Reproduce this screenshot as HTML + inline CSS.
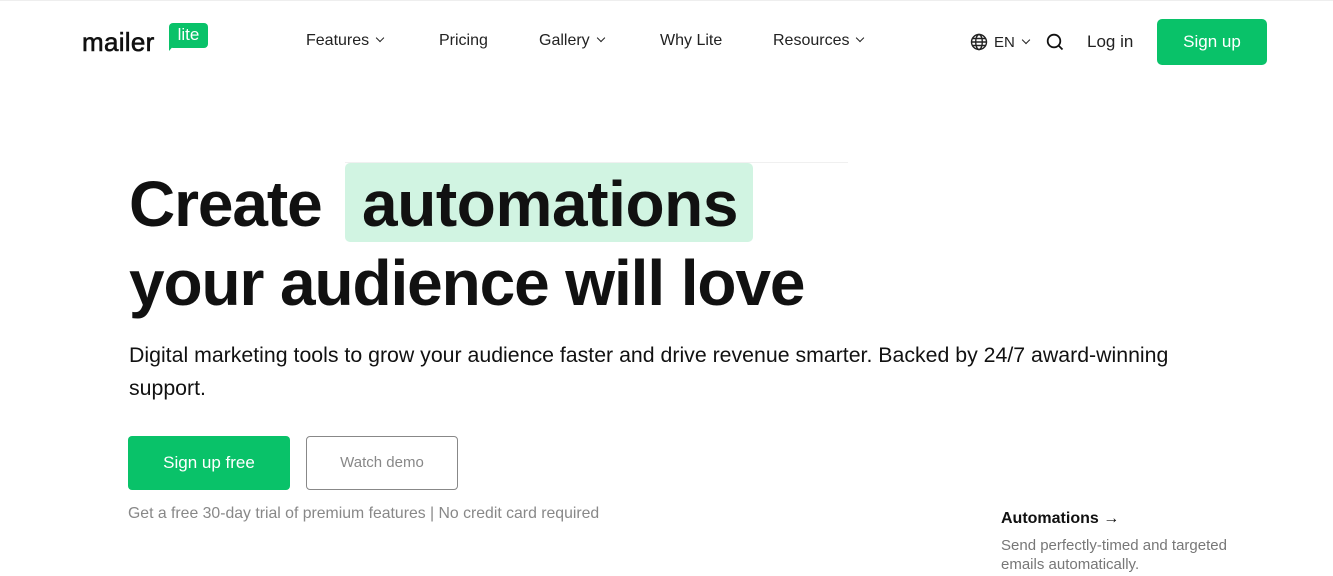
<!DOCTYPE html>
<html><head><meta charset="utf-8"><style>
*{margin:0;padding:0;box-sizing:border-box}
body{width:1333px;height:576px;overflow:hidden;background:#fff;font-family:"Liberation Sans",sans-serif;color:#111;position:relative}
.a{position:absolute;white-space:nowrap}
.nav{font-size:16px;color:#222;top:32px}
.chev{display:inline-block;width:6px;height:6px;border-right:1.6px solid #222;border-bottom:1.6px solid #222;transform:rotate(45deg);margin-left:8px;position:relative;top:-4px}
h1{font-size:64px;font-weight:bold;letter-spacing:-1.1px;position:absolute;white-space:nowrap}
</style></head><body>
<div style="position:absolute;top:0;left:0;width:1333px;height:1px;background:#eee"></div>
<div class="a" style="left:82px;top:27px;font-size:26px;letter-spacing:0.3px;color:#111;-webkit-text-stroke:0.6px #111">mailer</div>
<div class="a" style="left:169px;top:23px;width:39px;height:25px;background:#09c269;border-radius:4px;color:#fff;font-size:17px;text-align:center;line-height:24px">lite</div>
<div class="a" style="left:169px;top:44px;width:0;height:0;border-left:6px solid #09c269;border-bottom:7px solid transparent"></div>
<div class="a nav" style="left:306px">Features<span class="chev"></span></div>
<div class="a nav" style="left:439px">Pricing</div>
<div class="a nav" style="left:539px">Gallery<span class="chev"></span></div>
<div class="a nav" style="left:660px">Why Lite</div>
<div class="a nav" style="left:773px">Resources<span class="chev"></span></div>
<svg class="a" style="left:970px;top:33px" width="18" height="18" viewBox="0 0 18 18" fill="none" stroke="#222" stroke-width="1.4"><circle cx="9" cy="9" r="7.5"/><ellipse cx="9" cy="9" rx="3.3" ry="7.5"/><path d="M1.5 9h15M2.5 5.5h13M2.5 12.5h13"/></svg>
<div class="a nav" style="left:994px;top:34px;font-size:15px">EN<span class="chev"></span></div>
<svg class="a" style="left:1046px;top:33px" width="18" height="18" viewBox="0 0 18 18" fill="none" stroke="#111" stroke-width="1.8"><circle cx="8" cy="8" r="6.3"/><path d="M12.5 12.5l4 4"/></svg>
<div class="a nav" style="left:1087px;font-size:17px">Log in</div>
<div class="a" style="left:1157px;top:19px;width:110px;height:46px;background:#09c269;border-radius:5px;color:#fff;font-size:17px;text-align:center;line-height:46px">Sign up</div>

<div class="a" style="left:345px;top:163px;width:408px;height:79px;background:#d1f4e2;border-radius:5px"></div>
<div class="a" style="left:345px;top:162px;width:503px;height:1px;background:#f0f0f0"></div>
<h1 style="top:167px;left:129px">Create</h1>
<h1 style="top:167px;left:362px;letter-spacing:-0.4px">automations</h1>
<h1 style="top:246px;left:129px">your audience will love</h1>
<div class="a" style="left:129px;top:339px;font-size:21.3px;line-height:33px;color:#111;white-space:normal;width:1080px">Digital marketing tools to grow your audience faster and drive revenue smarter. Backed by 24/7 award-winning support.</div>
<div class="a" style="left:128px;top:436px;width:162px;height:54px;background:#09c269;border-radius:4px;color:#fff;font-size:17px;text-align:center;line-height:54px">Sign up free</div>
<div class="a" style="left:306px;top:436px;width:152px;height:54px;border:1px solid #888;border-radius:4px;color:#888;font-size:15px;text-align:center;line-height:52px">Watch demo</div>
<div class="a" style="left:128px;top:505px;font-size:15.8px;color:#888">Get a free 30-day trial of premium features | No credit card required</div>
<div class="a" style="left:1001px;top:510px;font-size:16px;font-weight:bold;color:#111">Automations →</div>
<div class="a" style="left:1001px;top:536px;font-size:15px;line-height:19px;color:#777;white-space:normal;width:250px">Send perfectly-timed and targeted emails automatically.</div>
</body></html>
